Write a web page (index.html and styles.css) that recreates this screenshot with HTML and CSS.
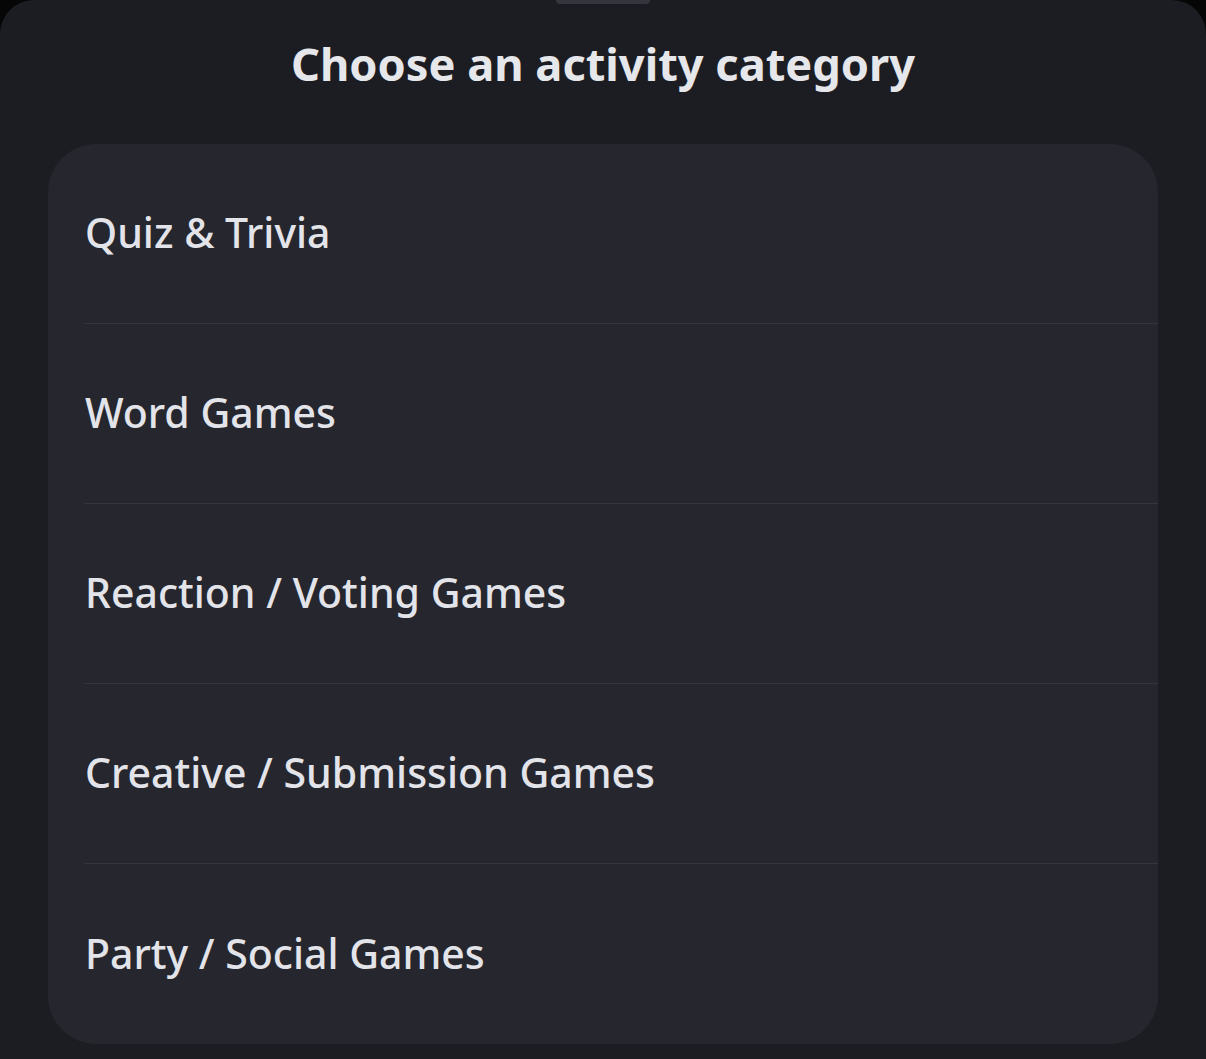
FILE: index.html
```html
<!DOCTYPE html>
<html lang="en">
<head>
<meta charset="utf-8">
<title>Choose an activity category</title>
<link rel="stylesheet" href="styles.css">
</head>
<body>
<div class="sheet">
  <div class="handle"></div>
  <h1 class="title">Choose an activity category</h1>
  <ul class="card">
    <li class="row"><span class="label">Quiz &amp; Trivia</span></li>
    <li class="row"><span class="label">Word Games</span></li>
    <li class="row"><span class="label">Reaction / Voting Games</span></li>
    <li class="row"><span class="label">Creative / Submission Games</span></li>
    <li class="row"><span class="label">Party / Social Games</span></li>
  </ul>
</div>
</body>
</html>
```
FILE: styles.css
```css
html, body {
  margin: 0;
  padding: 0;
  background: #060607;
  height: 100%;
  overflow: hidden;
}
body {
  font-family: "Noto Sans", "Open Sans", sans-serif;
  color: #e3e4e9;
}
.sheet {
  position: relative;
  background: #1c1d22;
  border-radius: 34px 34px 0 0;
  min-height: 1100px;
  padding: 0 48px;
  box-sizing: border-box;
}
.handle {
  position: absolute;
  top: 0;
  left: 556px;
  width: 94px;
  height: 4px;
  background: #34353d;
  border-radius: 0 0 4px 4px;
}
.title {
  margin: 0;
  height: 144px;
  box-sizing: border-box;
  padding-top: 32px;
  text-align: center;
  font-size: 45.2px;
  line-height: 64px;
  font-weight: 700;
  color: #e6e7eb;
}
.card {
  list-style: none;
  margin: 0;
  padding: 0;
  background: #25262e;
  border-radius: 48px;
  overflow: hidden;
}
.row {
  margin-left: 36px;
  height: 180px;
  box-sizing: border-box;
  display: flex;
  align-items: center;
  border-bottom: 1px solid #34353d;
}
.row:last-child {
  border-bottom: none;
}
.label {
  font-size: 41px;
  font-weight: 500;
  line-height: 1;
  padding-left: 1px;
  margin-bottom: 2px;
}
```
